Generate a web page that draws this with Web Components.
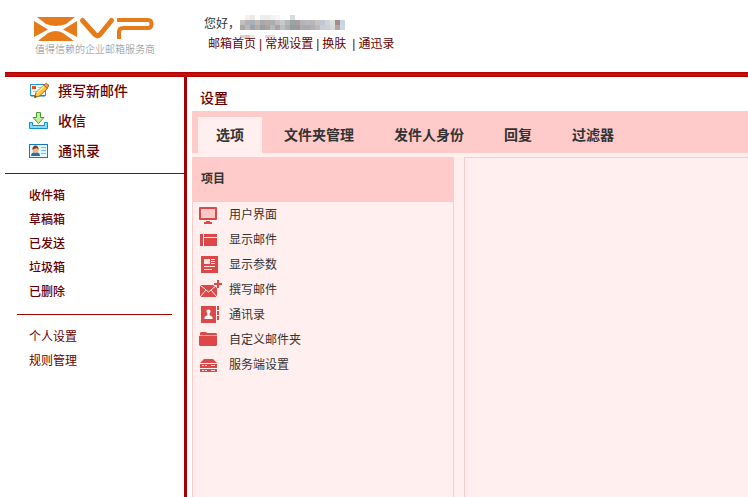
<!DOCTYPE html>
<html lang="zh-CN">
<head>
<meta charset="utf-8">
<title>设置</title>
<style>
  :root {
    --line: #a40000;
    --link: #660000;
    --text: #333;
    --pink: #ffcbca;
    --pale: #ffefee;
  }

  body {
    margin: 0;
    background: #fff;
    color: var(--text);
    font: 12px/24px "Liberation Sans", "Noto Sans CJK SC", sans-serif;
  }
</style>
</head>
<body>
<mail-app>
  <mail-header slot="header"></mail-header>
  <mail-sidebar slot="sidebar"></mail-sidebar>
  <mail-settings slot="main">
    <span slot="title">设置</span>
    <settings-panel>
      <span slot="heading">项目</span>
      <settings-item icon="display">用户界面</settings-item>
      <settings-item icon="layout">显示邮件</settings-item>
      <settings-item icon="news">显示参数</settings-item>
      <settings-item icon="write">撰写邮件</settings-item>
      <settings-item icon="book">通讯录</settings-item>
      <settings-item icon="folder">自定义邮件夹</settings-item>
      <settings-item icon="server">服务端设置</settings-item>
    </settings-panel>
  </mail-settings>
</mail-app>

<script>
const icons = {
  compose: `<svg width="20" height="18" viewBox="0 0 20 18">
    <rect x="1.5" y="2.5" width="15" height="11" fill="#f4fbff" stroke="#1a9ad6"/>
    <path d="M2 14h14" stroke="#1478ae"/>
    <rect x="3" y="4" width="4" height="3" fill="#f04a20"/>
    <path d="M9 5.500h5M4 9.500h4" stroke="#9cc8e8"/>
    <path d="M5.500 15.500l1.500-5 8-7.500 3.500 3.500-8 7.500z" fill="#ffc93c" stroke="#b36a12"/>
    <path d="M8 11l7-7" stroke="#fff0a0" stroke-width="1.500"/>
    <path d="M15 3l1.500-1.500q1 -.5 2 .5l1 1q.5 1 -.5 2L18 6.500z" fill="#f19a61" stroke="#b96335"/>
    <path d="M5.500 15.500l.6-2 1.500 1.500z" fill="#333"/>
  </svg>`,
  receive: `<svg width="20" height="18" viewBox="0 0 20 18">
    <path d="M.5 10.500h3v3h12v-3h3v6H.5z" fill="#82dcfa" stroke="#158fc4"/>
    <path d="M7.500.5h4v5h3.500L9.500 11.500 4 5.500h3.500z" fill="#c5ef9e" stroke="#4a9d35"/>
  </svg>`,
  contacts: `<svg width="20" height="18" viewBox="0 0 20 18">
    <rect x=".5" y="2.500" width="18" height="13" fill="#e5f6ff" stroke="#1578bd"/>
    <path d="M12 5.500h5M12 8.500h5M12 11.500h5" stroke="#73bfeb"/>
    <path d="M2 14c0-3 2-4 4.500-4s4.500 1 4.500 4z" fill="#256dad"/>
    <circle cx="6.500" cy="8" r="3" fill="#f7b586"/>
    <path d="M3.500 8c-1-6 7-6 6 0L8 6 5 7z" fill="#783e20"/>
  </svg>`,
  display: `<svg width="20" height="18" viewBox="0 0 20 18">
    <rect x="0" y="1" width="18" height="13" rx="1" fill="#dc4848"/>
    <rect x="2" y="3" width="14" height="9" fill="#f8c9c9"/>
    <path d="M7 15h4v1h2v2H5v-2h2z" fill="#dc4848"/>
  </svg>`,
  layout: `<svg width="20" height="18" viewBox="0 0 20 18">
    <path d="M1 3h3v12H1zM5 3h13v3H5zM5 7h13v8H5z" fill="#dc4848"/>
  </svg>`,
  news: `<svg width="20" height="18" viewBox="0 0 20 18">
    <rect x="2" y="0" width="17" height="17" fill="#dc4848"/>
    <path d="M5 3h6v5H5zM12 3h4v1h-4zM12 5h4v1h-4zM12 7h4v1h-4zM5 10h11v1H5zM5 13h8v1H5z" fill="#fde4e2"/>
  </svg>`,
  write: `<svg width="20" height="18" viewBox="0 0 20 18">
    <rect x="1" y="4" width="17" height="12" fill="#dc4848"/>
    <path d="M1 4l8.500 7L18 4M1 16l6-7M18 16l-6-7" fill="none" stroke="#feefee"/>
    <path d="M14-2h9v9h-5l-4-3z" fill="#ffefee"/>
    <path d="M18-1h2v3h3v2h-3v3h-2V4h-3V2h3z" fill="#dc4848"/>
  </svg>`,
  book: `<svg width="20" height="18" viewBox="0 0 20 18">
    <path d="M2 0h15v17H2zM18 0h2v4h-2zM18 5h2v4h-2zM18 10h2v4h-2z" fill="#dc4848"/>
    <path d="M7.500 5c0-2 4-2 4 0 0 2-1 2-1 4l3 2v2h-8v-2l3-2c0-2-1-2-1-4z" fill="#fff"/>
  </svg>`,
  folder: `<svg width="20" height="18" viewBox="0 0 20 18">
    <path d="M1 4V2l1-1h5l1 1h9l1 1v1z" fill="#dc4848"/>
    <path d="M1 4h17v1H1z" fill="#f2a5a3"/>
    <path d="M0 5h18v9l-1 1H1l-1-1z" fill="#dc4848"/>
  </svg>`,
  server: `<svg width="20" height="18" viewBox="0 0 20 18">
    <path d="M5 3h9l4 4H1zM1 8h17v4H1zM1 13h17v3H1z" fill="#dc4848"/>
    <path d="M3 9.500h2M6 9.500h2M12 9.500h4M3 14.500h2M6 14.500h2M12 14.500h4" stroke="#fde4e2"/>
  </svg>`
};

// colours of the blocks that hide the mail address, one array per row
const blocks = [
  ['', '#f5f1ef', '#efe6e6', '', '#e9eef0', '#f3e9e6', '#f2f2f0', '#f6f6f6', '', '', '#d5dcdb'],
  ['#c3c0bf', '#b5aeb3', '#a7b1b8', '#bfb8b3', '#a8a9ac', '#b6aaa5', '#a9adb0', '#c4bab7', '#c6cbd0', '#b3b8b6', '#9aa5a3',
    '#a69ea4', '#b5b3b5', '#b8b9bf', '#bcb5b8', '#c9c4c4', '#c6c5d2', '#cfd5d8', '#dadfe0', '#a28c8c', '#c7d5e2'],
  ['#aaa6a7', '#b8b6c1', '#99a4ac', '#b3adae', '#9c9ea2', '#aca3a0', '#b8b9bb', '#a7a2a6', '#b9c0c2', '#abb0ae', '#929e9e',
    '#9a979f', '#aaaab0', '#a7adb5', '#b3aeb1', '#bdb6ba', '#cacdd9', '#d4cdcd', '#cfdcdb', '#b9a2a0', '#c9d9e8'],
  [],
  ['#e5d0d2', '#dfc5c6', '#efe5e5', '', '', '#e6d6d6', '#eadfdf']
];

class MailApp extends HTMLElement {
  constructor() {
    super();
    this.attachShadow({ mode: 'open' });
    this.shadowRoot.innerHTML = `
      <style>
        :host {
          display: flex;
          flex-direction: column;
          min-height: 100vh;
          padding-left: 5px;
          box-sizing: border-box;
        }

        .columns {
          display: grid;
          grid-template-columns: 182px minmax(0, 1fr);
          flex: 1;
        }
      </style>
      <slot name="header"></slot>
      <div class="columns">
        <slot name="sidebar"></slot>
        <slot name="main"></slot>
      </div>
    `;
  }
}

class MailHeader extends HTMLElement {
  constructor() {
    super();
    const mosaic = blocks.map((row, y) => row.map((fill, x) =>
      fill ? `<rect x="${x * 5}" y="${y * 5 + 1}" width="5" height="${y === 4 ? 3 : 5}" fill="${fill}"/>` : ''
    ).join('')).join('');
    this.attachShadow({ mode: 'open' });
    this.shadowRoot.innerHTML = `
      <style>
        :host {
          display: block;
        }

        .top {
          display: flex;
          gap: 48px;
          height: 72px;
          padding-left: 28px;
        }

        .bar {
          height: 5px;
          background: linear-gradient(#a80000, #cc1212 50%, #a80000);
        }

        .logo {
          width: 123px;
          padding-top: 16px;
          color: #888;
          font-size: 10px;
          font-weight: 300;
          line-height: 14px;
          white-space: nowrap;
        }

        .logo svg {
          display: block;
        }

        .logo span {
          padding-left: 2px;
        }

        .account {
          padding-top: 14px;
          line-height: 20px;
        }

        .user {
          display: flex;
        }

        .user svg {
          overflow: visible;
        }

        nav {
          display: flex;
          gap: 3px;
          padding-left: 4px;
          color: var(--link);
        }

        .skin {
          padding-right: 3px;
        }

        a {
          color: var(--link);
          text-decoration: none;
        }
      </style>
      <div class="top">
        <div class="logo">
          <svg width="122" height="27" viewBox="0 0 122 27">
            <path d="M4 1h38L33 8q-10 4-20 0zM1 5l14 8.500L1 21zM44 5L30 13.500 44 21zM5 25l10-8q8-4 15 0l11 8z" fill="#e77b1c"/>
            <path d="M49.500 4.500L62 18.500q2.500 2.500 5 0L78.500 4.500" fill="none" stroke="#e77b1c" stroke-width="5" stroke-linecap="round" stroke-linejoin="round"/>
            <path d="M84 4h31q3.500 0 3.500 4t-3.500 4H90q-4 0-4 4V23" fill="none" stroke="#e77b1c" stroke-width="4"/>
          </svg>
          <span>值得信赖的企业邮箱服务商</span>
        </div>
        <div class="account">
          <div class="user">您好，<svg width="105" height="20" shape-rendering="crispEdges">${mosaic}</svg></div>
          <nav>
            <a href="#">邮箱首页</a><span>|</span>
            <a href="#">常规设置</a><span>|</span>
            <a class="skin" href="#">换肤</a><span>|</span>
            <a href="#">通迅录</a>
          </nav>
        </div>
      </div>
      <div class="bar"></div>
    `;
  }
}

class MailSidebar extends HTMLElement {
  constructor() {
    super();
    const main = [['compose', '撰写新邮件'], ['receive', '收信'], ['contacts', '通讯录']];
    const folders = ['收件箱', '草稿箱', '已发送', '垃圾箱', '已删除'];
    const tools = ['个人设置', '规则管理'];
    this.attachShadow({ mode: 'open' });
    this.shadowRoot.innerHTML = `
      <style>
        :host {
          display: block;
          border-right: 3px solid var(--line);
        }

        nav {
          display: flex;
          flex-direction: column;
          padding-left: 24px;
        }

        a {
          color: var(--link);
          text-decoration: none;
        }

        .main {
          height: 96px;
          border-bottom: 1px solid var(--line);
          font-size: 14px;
          font-weight: 500;
          line-height: 28px;
          gap: 2px;
        }

        .main a {
          display: flex;
          align-items: center;
          gap: 9px;
        }

        .folders {
          padding-top: 10px;
          font-weight: 500;
        }

        hr {
          margin: 10px 12px;
          border: 0;
          border-top: 1px solid var(--line);
        }
      </style>
      <nav class="main">${main.map(([icon, name]) => `<a href="#">${icons[icon]}${name}</a>`).join('')}</nav>
      <nav class="folders">${folders.map(name => `<a href="#">${name}</a>`).join('')}</nav>
      <hr>
      <nav>${tools.map(name => `<a href="#">${name}</a>`).join('')}</nav>
    `;
  }
}

class MailSettings extends HTMLElement {
  constructor() {
    super();
    this._tabs = ['选项', '文件夹管理', '发件人身份', '回复', '过滤器'];

    this.attachShadow({ mode: 'open' });
    this.shadowRoot.innerHTML = `
      <style>
        :host {
          display: flex;
          flex-direction: column;
          margin-left: 5px;
        }

        h1 {
          margin: 0;
          padding: 11px 8px 3px;
          color: var(--link);
          font-size: 14px;
          font-weight: 500;
          line-height: 20px;
        }

        .tabs {
          display: flex;
          gap: 4px;
          padding: 6px 6px 0;
          background: var(--pink);
        }

        button {
          height: 36px;
          padding: 0 18px;
          border: 0;
          background: none;
          color: var(--text);
          font: inherit;
          font-size: 14px;
          font-weight: 700;
          white-space: nowrap;
          cursor: pointer;
        }

        button.active {
          background: var(--pale);
        }

        .body {
          display: grid;
          grid-template-columns: 262px minmax(0, 1fr);
          gap: 10px;
          flex: 1;
          padding-top: 4px;
          background: var(--pale);
        }

        .content {
          border: solid var(--pink);
          border-width: 1px 0 0 1px;
        }
      </style>
      <h1><slot name="title"></slot></h1>
      <div class="tabs">${this._tabs.map((name, i) => `<button type="button"${i ? '' : ' class="active"'}>${name}</button>`).join('')}</div>
      <div class="body">
        <slot></slot>
        <div class="content"></div>
      </div>
    `;
  }

  connectedCallback() {
    const buttons = this.shadowRoot.querySelectorAll('button');
    buttons.forEach(b => b.addEventListener('click', () => {
      buttons.forEach(other => other.classList.toggle('active', other === b));
    }));
  }
}

class SettingsPanel extends HTMLElement {
  constructor() {
    super();
    this.attachShadow({ mode: 'open' });
    this.shadowRoot.innerHTML = `
      <style>
        :host {
          display: block;
          border: solid var(--pink);
          border-width: 0 1px;
        }

        h2 {
          margin: 0;
          padding-left: 8px;
          background: var(--pink);
          font-size: 12px;
          font-weight: 700;
          line-height: 45px;
        }

        nav {
          display: flex;
          flex-direction: column;
          padding-left: 6px;
        }
      </style>
      <h2><slot name="heading"></slot></h2>
      <nav><slot></slot></nav>
    `;
  }
}

class SettingsItem extends HTMLElement {
  constructor() {
    super();
    this.attachShadow({ mode: 'open' });
    this.shadowRoot.innerHTML = `
      <style>
        :host {
          display: block;
        }

        a {
          display: flex;
          align-items: center;
          gap: 10px;
          height: 25px;
          color: var(--text);
          text-decoration: none;
        }

        svg {
          overflow: visible;
        }
      </style>
      <a href="#">${icons[this.getAttribute('icon')]}<slot></slot></a>
    `;
  }
}

customElements.define('mail-app', MailApp);
customElements.define('mail-header', MailHeader);
customElements.define('mail-sidebar', MailSidebar);
customElements.define('mail-settings', MailSettings);
customElements.define('settings-panel', SettingsPanel);
customElements.define('settings-item', SettingsItem);
</script>
</body>
</html>
